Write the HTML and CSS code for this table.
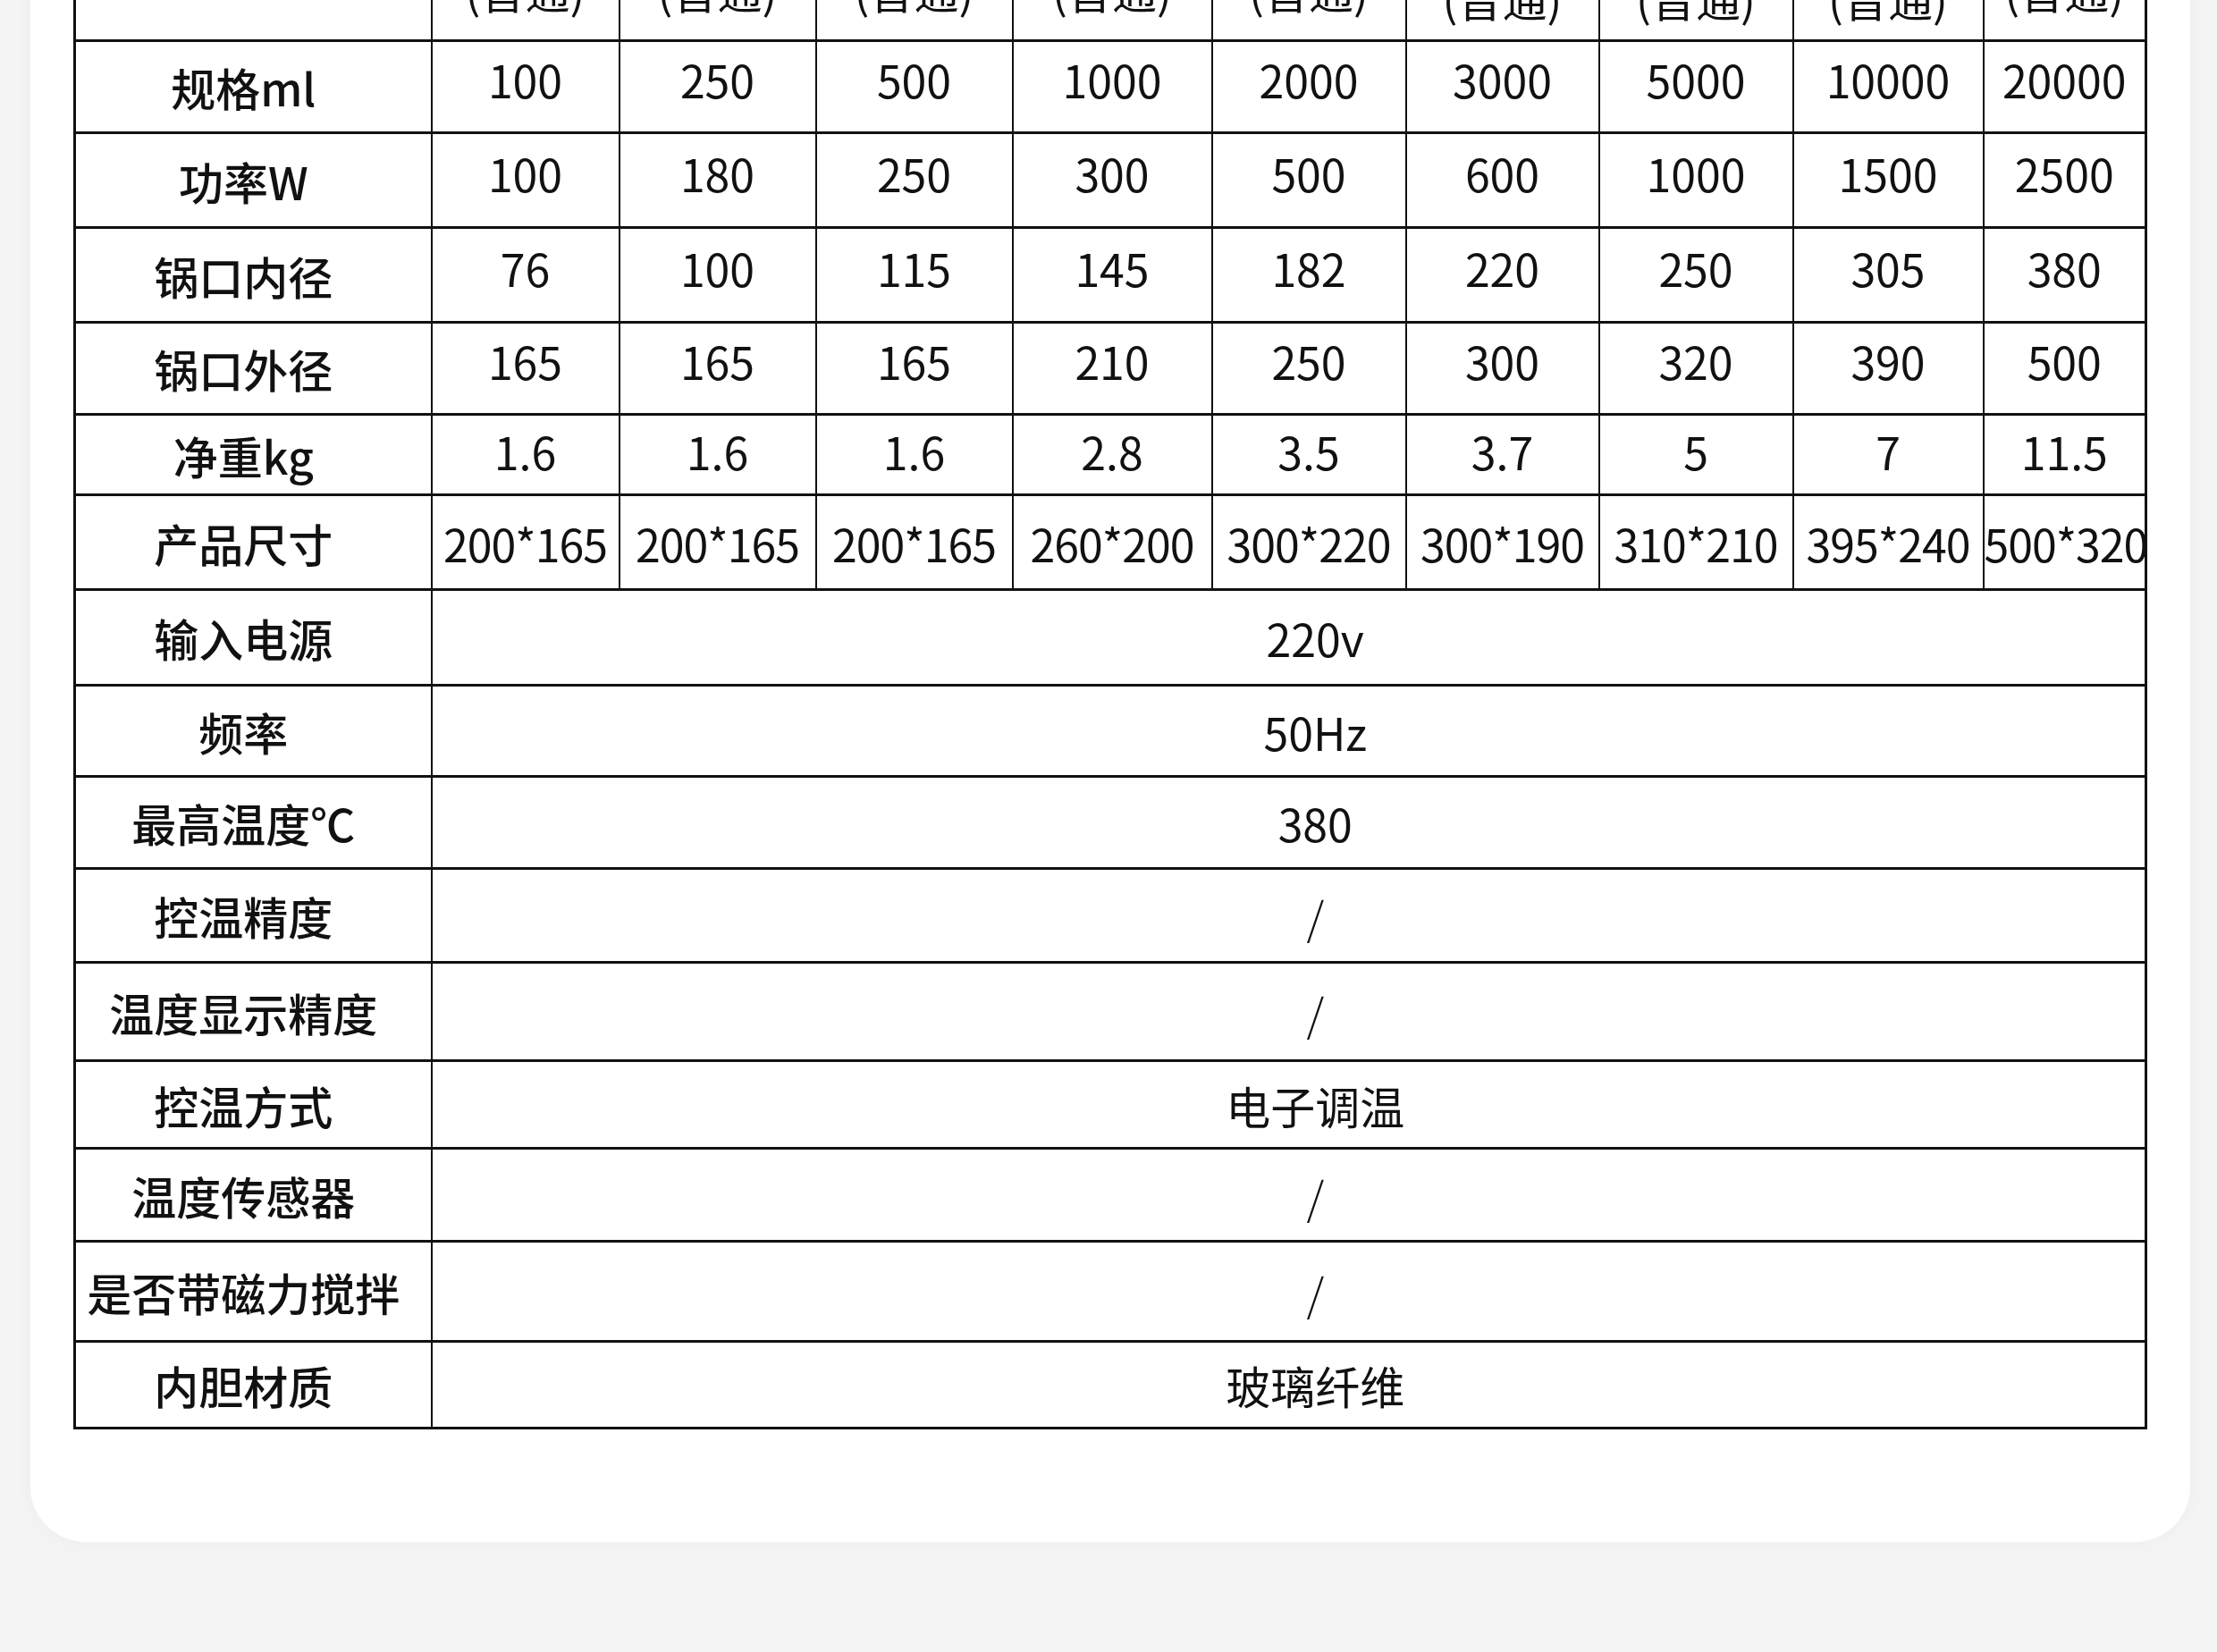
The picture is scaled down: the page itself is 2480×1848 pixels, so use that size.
FILE: index.html
```html
<!DOCTYPE html>
<html lang="zh-CN">
<head>
<meta charset="utf-8">
<title>规格参数</title>
<link rel="stylesheet" href="styles.css">
</head>
<body>
<div class="page">
  <div class="card">
    <table class="spec">
      <colgroup>
        <col class="c0"><col class="c1"><col class="c2"><col class="c3"><col class="c4"><col class="c5"><col class="c6"><col class="c7"><col class="c8"><col class="c9">
      </colgroup>
      <tr class="head">
        <th></th>
        <td>(普通)</td><td>(普通)</td><td>(普通)</td><td>(普通)</td><td>(普通)</td>
        <td class="low">(普通)</td><td class="low">(普通)</td><td class="low">(普通)</td><td>(普通)</td>
      </tr>
      <tr class="h103 up"><th>规格ml</th><td>100</td><td>250</td><td>500</td><td>1000</td><td>2000</td><td>3000</td><td>5000</td><td>10000</td><td>20000</td></tr>
      <tr class="h106 up"><th>功率W</th><td>100</td><td>180</td><td>250</td><td>300</td><td>500</td><td>600</td><td>1000</td><td>1500</td><td>2500</td></tr>
      <tr class="h106 up"><th>锅口内径</th><td>76</td><td>100</td><td>115</td><td>145</td><td>182</td><td>220</td><td>250</td><td>305</td><td>380</td></tr>
      <tr class="h103 up"><th>锅口外径</th><td>165</td><td>165</td><td>165</td><td>210</td><td>250</td><td>300</td><td>320</td><td>390</td><td>500</td></tr>
      <tr class="h90 up-s"><th>净重kg</th><td>1.6</td><td>1.6</td><td>1.6</td><td>2.8</td><td>3.5</td><td>3.7</td><td>5</td><td>7</td><td>11.5</td></tr>
      <tr class="h106 size"><th>产品尺寸</th><td>200*165</td><td>200*165</td><td>200*165</td><td>260*200</td><td>300*220</td><td>300*190</td><td>310*210</td><td>395*240</td><td>500*320</td></tr>
      <tr class="h107"><th>输入电源</th><td class="merged" colspan="9">220v</td></tr>
      <tr class="h102"><th>频率</th><td class="merged" colspan="9">50Hz</td></tr>
      <tr class="h103"><th>最高温度℃</th><td class="merged" colspan="9">380</td></tr>
      <tr class="h105"><th>控温精度</th><td class="merged slash" colspan="9">/</td></tr>
      <tr class="h110"><th>温度显示精度</th><td class="merged slash" colspan="9">/</td></tr>
      <tr class="h98"><th>控温方式</th><td class="merged" colspan="9">电子调温</td></tr>
      <tr class="h104"><th>温度传感器</th><td class="merged slash" colspan="9">/</td></tr>
      <tr class="h112"><th>是否带磁力搅拌</th><td class="merged slash" colspan="9">/</td></tr>
      <tr class="h97"><th>内胆材质</th><td class="merged" colspan="9">玻璃纤维</td></tr>
    </table>
  </div>
</div>
</body>
</html>
```
FILE: styles.css
```css
html, body {
  margin: 0;
  padding: 0;
  background: #f4f4f4;
  font-family: "Noto Sans CJK SC", "Noto Sans", sans-serif;
  color: #111;
}

.page {
  height: 1848px;
  overflow: hidden;
}

.card {
  margin: -150px 30px 0 34px;
  padding: 84px 50px 126px 48px;
  background: #fff;
  border-radius: 0 0 62px 62px;
  box-shadow: 0 0 24px rgba(0, 0, 0, 0.03);
}

.spec {
  width: 2317px;
  table-layout: fixed;
  border-collapse: collapse;
  border: 3px solid #111;
}

.c0 { width: 399px; }
.c1 { width: 210px; }
.c2 { width: 220px; }
.c3 { width: 220px; }
.c4 { width: 223px; }
.c5 { width: 217px; }
.c6 { width: 216px; }
.c7 { width: 217px; }
.c8 { width: 213px; }
.c9 { width: 182px; }

.spec th,
.spec td {
  padding: 0;
  border-top: 3px solid #111;
  border-bottom: 3px solid #111;
  border-left: 2px solid #111;
  border-right: 2px solid #111;
  text-align: center;
  vertical-align: middle;
  white-space: nowrap;
  font-size: 50px;
  line-height: 60px;
}

.spec th {
  font-weight: 500;
  padding-right: 22px;
}

.spec td {
  font-weight: 400;
}

.head { height: 110px; }
.head td {
  vertical-align: bottom;
  padding-bottom: 26px;
}
.head td.low { padding-bottom: 17px; }

.h90 { height: 90px; }
.h97 { height: 97px; }
.h98 { height: 98px; }
.h102 { height: 102px; }
.h103 { height: 103px; }
.h104 { height: 104px; }
.h105 { height: 105px; }
.h106 { height: 106px; }
.h107 { height: 107px; }
.h110 { height: 110px; }
.h112 { height: 112px; }

.up td { padding-bottom: 18px; }
.up-s td { padding-bottom: 10px; }

.size td {
  letter-spacing: -1px;
}

.spec td.merged {
  padding-left: 60px;
}

.spec td.slash {
  font-weight: 300;
}
```
